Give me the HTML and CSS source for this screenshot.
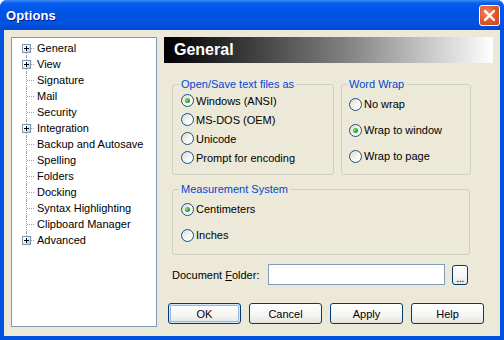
FILE: index.html
```html
<!DOCTYPE html>
<html>
  <head>
    <title>Options</title>
    <link rel="stylesheet" href="styles.css">
  </head>
  <body>
    <div class="window">
      <div class="titlebar">
        <span class="title">Options</span>
        <button class="close-btn">
          <svg width="11" height="11" viewBox="0 0 11 11">
            <path d="M1 1 L10 10 M10 1 L1 10" stroke="#fff" stroke-width="2.4" stroke-linecap="square" />
          </svg>
        </button>
      </div>

      <div class="client">
        <ul class="tree">
          <li class="node first"><span class="twig"><span class="exp"></span></span><span class="label">General</span></li>
          <li class="node"><span class="twig"><span class="exp"></span></span><span class="label">View</span></li>
          <li class="node"><span class="twig"></span><span class="label">Signature</span></li>
          <li class="node"><span class="twig"></span><span class="label">Mail</span></li>
          <li class="node"><span class="twig"></span><span class="label">Security</span></li>
          <li class="node"><span class="twig"><span class="exp"></span></span><span class="label">Integration</span></li>
          <li class="node"><span class="twig"></span><span class="label">Backup and Autosave</span></li>
          <li class="node"><span class="twig"></span><span class="label">Spelling</span></li>
          <li class="node"><span class="twig"></span><span class="label">Folders</span></li>
          <li class="node"><span class="twig"></span><span class="label">Docking</span></li>
          <li class="node"><span class="twig"></span><span class="label">Syntax Highlighting</span></li>
          <li class="node"><span class="twig"></span><span class="label">Clipboard Manager</span></li>
          <li class="node last"><span class="twig"><span class="exp"></span></span><span class="label">Advanced</span></li>
        </ul>

        <div class="panel">
          <div class="page-header">General</div>

          <div class="group-row">
            <fieldset class="group group-encoding">
              <legend>Open/Save text files as</legend>
              <div class="radio-row"><span class="radio checked"></span>Windows (ANSI)</div>
              <div class="radio-row"><span class="radio"></span>MS-DOS (OEM)</div>
              <div class="radio-row"><span class="radio"></span>Unicode</div>
              <div class="radio-row"><span class="radio"></span>Prompt for encoding</div>
            </fieldset>

            <fieldset class="group group-wrap">
              <legend>Word Wrap</legend>
              <div class="radio-row tall"><span class="radio"></span>No wrap</div>
              <div class="radio-row tall"><span class="radio checked"></span>Wrap to window</div>
              <div class="radio-row tall"><span class="radio"></span>Wrap to page</div>
            </fieldset>
          </div>

          <fieldset class="group group-measure">
            <legend>Measurement System</legend>
            <div class="radio-row tall"><span class="radio checked"></span>Centimeters</div>
            <div class="radio-row tall"><span class="radio"></span>Inches</div>
          </fieldset>

          <div class="folder-row">
            <span class="folder-label">Document <u>F</u>older:</span>
            <span class="textbox"></span>
            <button class="xp-button browse">...</button>
          </div>

          <div class="button-row">
            <button class="xp-button default">OK</button>
            <button class="xp-button">Cancel</button>
            <button class="xp-button">Apply</button>
            <button class="xp-button">Help</button>
          </div>
        </div>
      </div>
    </div>
  </body>
</html>
```

FILE: styles.css
```css
body {
  margin: 0;
  font-family: "Liberation Sans", Arial, sans-serif;
  font-size: 11px;
  color: #000;
  background-color: #fff;
}

.window {
  width: 504px;
  height: 340px;
  display: flex;
  flex-direction: column;
  background-color: #0053e1;
  border-radius: 7px 7px 0 0;
  overflow: hidden;
}

.titlebar {
  height: 30px;
  flex: none;
  display: flex;
  align-items: center;
  justify-content: space-between;
  padding: 0 4px 0 6px;
  background: linear-gradient(to bottom, #3b8cf5 0, #0a5fef 3px, #0058ee 6px, #0054e3 14px, #0053e0 24px, #0149d6 29px);
}

.title {
  color: #fff;
  font-weight: bold;
  font-size: 13px;
  letter-spacing: 0.1px;
  text-shadow: 1px 1px 0 #0a1c80;
  margin-top: 1px;
}

.close-btn {
  width: 21px;
  height: 21px;
  padding: 0;
  margin-top: 1px;
  border: 1px solid #fff;
  border-radius: 3px;
  background: radial-gradient(circle at 35% 35%, #ee8a68 0, #e0582c 50%, #c8461d 100%);
  display: flex;
  align-items: center;
  justify-content: center;
}

.client {
  flex: 1;
  margin: 0 4px 4px 4px;
  padding: 7px 0 0 7px;
  background-color: #ece9d8;
  display: flex;
  align-items: flex-start;
}

/* tree */
.tree {
  list-style: none;
  margin: 0;
  padding: 2px 0 0 6px;
  width: 138px;
  height: 286px;
  background-color: #fff;
  border: 1px solid #7f9db9;
}

.node {
  display: flex;
  align-items: center;
  height: 16px;
}

.twig {
  position: relative;
  width: 16px;
  height: 16px;
  flex: none;
}

.twig::before {
  content: "";
  position: absolute;
  left: 8px;
  top: 0;
  bottom: 0;
  border-left: 1px dotted #a0a0a0;
}

.twig::after {
  content: "";
  position: absolute;
  left: 9px;
  top: 8px;
  width: 7px;
  border-top: 1px dotted #a0a0a0;
}

.first .twig::before {
  top: 8px;
}

.last .twig::before {
  bottom: 8px;
}

.exp {
  position: absolute;
  left: 4px;
  top: 4px;
  width: 7px;
  height: 7px;
  border: 1px solid #7898b5;
  background: linear-gradient(135deg, #fff 30%, #c9c6b7);
  z-index: 1;
}

.exp::before {
  content: "";
  position: absolute;
  left: 1px;
  top: 3px;
  width: 5px;
  height: 1px;
  background-color: #000;
}

.exp::after {
  content: "";
  position: absolute;
  left: 3px;
  top: 1px;
  width: 1px;
  height: 5px;
  background-color: #000;
}

.label {
  margin-left: 3px;
  white-space: nowrap;
}

/* right side */
.panel {
  width: 329px;
  margin-left: 7px;
  display: flex;
  flex-direction: column;
}

.page-header {
  height: 26px;
  padding-left: 10px;
  display: flex;
  align-items: center;
  background: linear-gradient(to right, #000 0, #808080 55%, #fff 100%);
  color: #fff;
  font-size: 16px;
  font-weight: bold;
}

.group-row {
  display: flex;
  gap: 7px;
  margin: 15px 0 0 8px;
}

.group {
  margin: 0;
  min-width: 0;
  padding: 0 0 5px 8px;
  border: 1px solid #d0d0bf;
  border-radius: 3px;
}

.group legend {
  color: #0046d5;
  padding: 0 2px;
  margin-left: -2px;
  line-height: 13px;
}

.group-encoding {
  width: 152px;
}

.group-wrap {
  width: 121px;
  padding-left: 7px;
}

.group-measure {
  width: 288px;
  margin: 8px 0 0 8px;
  padding-bottom: 6px;
}

.radio-row {
  display: flex;
  align-items: center;
  height: 19px;
  white-space: nowrap;
}

.radio-row.tall {
  height: 26px;
}

.radio {
  box-sizing: border-box;
  width: 13px;
  height: 13px;
  margin-right: 2px;
  border: 1px solid #1c5180;
  border-radius: 50%;
  background: linear-gradient(135deg, #dcd9cf 0, #f8f8f6 60%, #fff 100%);
  display: flex;
  align-items: center;
  justify-content: center;
}

.radio.checked::after {
  content: "";
  width: 5px;
  height: 5px;
  border-radius: 50%;
  background: radial-gradient(circle at 35% 35%, #8be08b 0, #21a121 60%, #1a8a1a 100%);
}

.folder-row {
  display: flex;
  align-items: center;
  margin: 9px 0 0 8px;
}

.folder-label {
  width: 96px;
}

.folder-label u {
  text-decoration: underline;
}

.textbox {
  box-sizing: border-box;
  width: 177px;
  height: 21px;
  background-color: #fff;
  border: 1px solid #7f9db9;
}

.xp-button {
  font-family: "Liberation Sans", Arial, sans-serif;
  font-size: 11px;
  color: #000;
  box-sizing: border-box;
  width: 73px;
  height: 21px;
  padding: 0;
  border: 1px solid #003c74;
  border-radius: 3px;
  background: linear-gradient(to bottom, #fff 0, #f5f5f2 60%, #e4e3dc 100%);
}

.xp-button.default {
  box-shadow: inset 0 0 0 1px #cee7ff, inset 0 0 0 2px #98b8ea;
}

.xp-button.browse {
  width: 16px;
  height: 20px;
  margin-left: 7px;
  line-height: 20px;
  letter-spacing: -0.5px;
  padding-top: 2px;
}

.button-row {
  display: flex;
  gap: 8px;
  margin: 18px 0 0 4px;
}
```
